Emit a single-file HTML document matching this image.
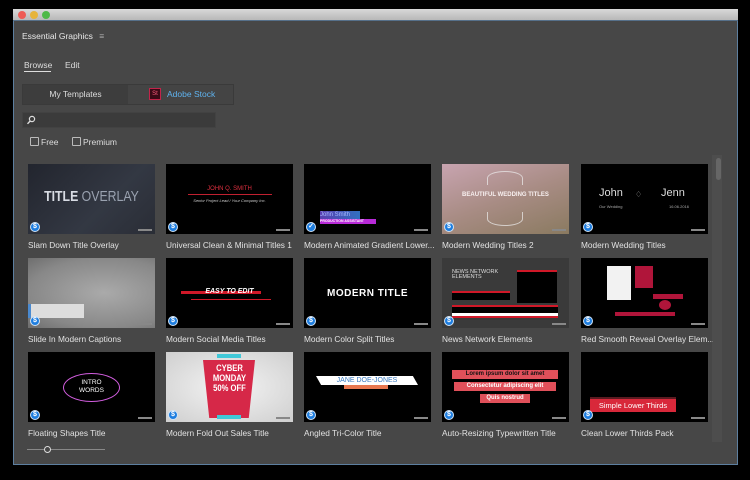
<!DOCTYPE html>
<html><head><meta charset="utf-8"><style>
*{margin:0;padding:0;box-sizing:border-box}
body{width:750px;height:480px;background:#000;position:relative;overflow:hidden;font-family:"Liberation Sans",sans-serif;color:#ddd}
.a{position:absolute}
.win{left:13px;top:9px;width:725px;height:456px;background:#474747;border:1px solid #5d7fa0;border-top:none}
.tb{left:13px;top:9px;width:725px;height:12px;background:linear-gradient(#d8d8d8,#b8b8b8);border-bottom:1px solid #56708a}
.dot{width:8px;height:8px;border-radius:50%;top:11px}
.t{width:127px;height:70px;overflow:hidden;background:#000}
.lb{font-size:8.3px;color:#e2e2e2;white-space:nowrap;width:132px;overflow:hidden}
.bd{width:10px;height:10px;border-radius:50%;background:#1e7ee0;border:1px solid #cfe3f7;left:2px;bottom:2px;color:#fff;font-size:7px;font-weight:bold;text-align:center;line-height:8px}
.id{right:3px;bottom:3px;width:14px;height:2px;background:#888}
.cb{width:9px;height:9px;border:1px solid #bbb;border-radius:1px}
</style></head><body>
<div class="a win"></div>
<div class="a tb"></div>
<div class="a dot" style="left:18px;background:#ee5b55"></div>
<div class="a dot" style="left:30px;background:#e6b43a"></div>
<div class="a dot" style="left:42px;background:#4fb948"></div>

<div class="a" style="left:22px;top:31px;font-size:8.5px;color:#e8e8e8">Essential Graphics <span style="color:#aaa;margin-left:4px">&#8801;</span></div>
<div class="a" style="left:24px;top:60px;font-size:8.5px;color:#ddd">Browse</div>
<div class="a" style="left:24px;top:71px;width:27px;height:1px;background:#ddd"></div>
<div class="a" style="left:65px;top:60px;font-size:8.5px;color:#ddd">Edit</div>

<div class="a" style="left:22px;top:84px;width:212px;height:21px;background:#444;border:1px solid #3a3a3a"></div>
<div class="a" style="left:23px;top:85px;width:105px;height:19px;background:#3d3d3d;font-size:8.5px;text-align:center;line-height:19px;color:#ddd">My Templates</div>
<div class="a" style="left:149px;top:88px;width:12px;height:12px;background:#3a0a16;border:1px solid #c2244a;font-size:6px;color:#ff5d7f;text-align:center;line-height:10px">St</div>
<div class="a" style="left:167px;top:89px;font-size:8.5px;color:#5fb2ee">Adobe Stock</div>

<div class="a" style="left:22px;top:112px;width:194px;height:16px;background:#3b3b3b;border:1px solid #424242"></div>
<svg class="a" style="left:26px;top:115px" width="10" height="10"><circle cx="6" cy="4" r="2.6" fill="none" stroke="#ddd" stroke-width="1.2"/><path d="M4.2 6L1.5 8.8" stroke="#ddd" stroke-width="1.4"/></svg>

<div class="a cb" style="left:30px;top:137px"></div><div class="a" style="left:41px;top:137px;font-size:8.5px">Free</div>
<div class="a cb" style="left:72px;top:137px"></div><div class="a" style="left:83px;top:137px;font-size:8.5px">Premium</div>

<div class="a" style="left:712px;top:155px;width:10px;height:287px;background:#4d4d4d"></div>
<div class="a" style="left:716px;top:158px;width:5px;height:22px;border-radius:3px;background:#666"></div>

<div class="a t" style="left:28px;top:164px;background:linear-gradient(135deg,#22252e,#333843 60%,#2a2d36)"><div class="a" style="left:0;width:127px;top:24px;text-align:center;font-size:15px;font-weight:bold;color:#d8dce4;transform:scaleX(.82)">TITLE <span style="font-weight:normal;color:#9aa2b0">OVERLAY</span></div><div class="a bd">$</div><div class="a id"></div></div>
<div class="a t" style="left:166px;top:164px"><div class="a" style="width:127px;top:22px;text-align:center;font-size:6px;color:#e03040">JOHN Q. SMITH</div><div class="a" style="left:22px;top:30px;width:84px;height:1px;background:#c02030"></div><div class="a" style="width:127px;top:34px;text-align:center;font-size:4px;color:#ccc;font-style:italic">Senior Project Lead / Your Company Inc.</div><div class="a bd">$</div><div class="a id"></div></div>
<div class="a t" style="left:304px;top:164px"><div class="a" style="left:16px;top:47px;width:40px;height:8px;background:linear-gradient(90deg,#5a3fb0,#3070c0);font-size:6px;color:#a9b8ff;line-height:8px">John Smith</div><div class="a" style="left:16px;top:55px;width:56px;height:5px;background:#b82ad8;font-size:3.5px;color:#fff;line-height:5px;font-weight:bold">PRODUCTION ASSISTANT</div><div class="a bd">&#10003;</div><div class="a id"></div></div>
<div class="a t" style="left:442px;top:164px;background:linear-gradient(160deg,#c8a4b0,#a88c84 50%,#8a7a60)"><div class="a" style="left:45px;top:7px;width:36px;height:14px;border:1px solid #eee;border-radius:50% 50% 0 0;border-bottom:none;opacity:.7"></div><div class="a" style="width:127px;top:28px;text-align:center;font-size:6px;font-weight:bold;color:#f8f0f0">BEAUTIFUL WEDDING TITLES</div><div class="a" style="left:45px;top:48px;width:36px;height:14px;border:1px solid #eee;border-radius:0 0 50% 50%;border-top:none;opacity:.7"></div><div class="a bd">$</div><div class="a id"></div></div>
<div class="a t" style="left:581px;top:164px"><div class="a" style="left:18px;top:23px;font-size:11px;color:#ddd">John</div><div class="a" style="left:54px;top:26px;font-size:8px;color:#aaa">&#9826;</div><div class="a" style="left:80px;top:23px;font-size:11px;color:#ddd">Jenn</div><div class="a" style="left:18px;top:40px;font-size:4px;color:#aaa">Our Wedding</div><div class="a" style="left:88px;top:40px;font-size:4px;color:#aaa">16.06.2016</div><div class="a bd">$</div><div class="a id"></div></div>
<div class="a lb" style="left:28px;top:240px">Slam Down Title Overlay</div>
<div class="a lb" style="left:166px;top:240px">Universal Clean &amp; Minimal Titles 1</div>
<div class="a lb" style="left:304px;top:240px">Modern Animated Gradient Lower...</div>
<div class="a lb" style="left:442px;top:240px">Modern Wedding Titles 2</div>
<div class="a lb" style="left:581px;top:240px">Modern Wedding Titles</div>

<div class="a t" style="left:28px;top:258px;background:radial-gradient(ellipse at 60% 50%,#aaa,#888 70%,#6e6e6e)"><div class="a" style="left:0;top:46px;width:56px;height:14px;background:#ddd;border-left:3px solid #4a8ad0"></div><div class="a bd">$</div><div class="a id"></div></div>
<div class="a t" style="left:166px;top:258px"><div class="a" style="left:15px;top:33px;width:80px;height:3px;background:#d01828"></div><div class="a" style="width:127px;top:30px;text-align:center;font-size:7px;font-weight:bold;font-style:italic;color:#fff">EASY TO EDIT</div><div class="a" style="left:25px;top:41px;width:80px;height:1px;background:#d01828"></div><div class="a bd">$</div><div class="a id"></div></div>
<div class="a t" style="left:304px;top:258px"><div class="a" style="width:127px;top:30px;text-align:center;font-size:10px;font-weight:bold;color:#fff;letter-spacing:.5px">MODERN TITLE</div><div class="a bd">$</div><div class="a id"></div></div>
<div class="a t" style="left:442px;top:258px;background:#3a3a3a"><div class="a" style="left:10px;top:12px;font-size:5.5px;color:#ddd;line-height:5px">NEWS NETWORK<br>ELEMENTS</div><div class="a" style="left:75px;top:12px;width:40px;height:33px;background:#000;border-top:2px solid #d01828"></div><div class="a" style="left:10px;top:33px;width:58px;height:9px;background:#000;border-top:2px solid #d01828"></div><div class="a" style="left:10px;top:47px;width:106px;height:8px;background:#000;border-top:2px solid #d01828"></div><div class="a" style="left:10px;top:55px;width:106px;height:5px;background:#fff;border-bottom:2px solid #d01828"></div><div class="a bd">$</div><div class="a id"></div></div>
<div class="a t" style="left:581px;top:258px"><div class="a" style="left:26px;top:8px;width:24px;height:34px;background:#f2f2f2"></div><div class="a" style="left:54px;top:8px;width:18px;height:22px;background:#b0153a"></div><div class="a" style="left:72px;top:36px;width:30px;height:5px;background:#b0153a"></div><div class="a" style="left:78px;top:42px;width:12px;height:10px;background:#b0153a;border-radius:50%"></div><div class="a" style="left:34px;top:54px;width:60px;height:4px;background:#b0153a"></div><div class="a bd">$</div><div class="a id"></div></div>
<div class="a lb" style="left:28px;top:334px">Slide In Modern Captions</div>
<div class="a lb" style="left:166px;top:334px">Modern Social Media Titles</div>
<div class="a lb" style="left:304px;top:334px">Modern Color Split Titles</div>
<div class="a lb" style="left:442px;top:334px">News Network Elements</div>
<div class="a lb" style="left:581px;top:334px">Red Smooth Reveal Overlay Elem...</div>

<div class="a t" style="left:28px;top:352px"><div class="a" style="left:35px;top:21px;width:57px;height:29px;border:1.5px solid #d35ee0;border-radius:50%;text-align:center;font-size:6.5px;color:#fff;line-height:8px;padding-top:5px">INTRO<br>WORDS</div><div class="a bd">$</div><div class="a id"></div></div>
<div class="a t" style="left:166px;top:352px;background:radial-gradient(#f4f4f4,#cfcfcf)"><div class="a" style="left:37px;top:8px;width:52px;height:58px;background:#d62848;clip-path:polygon(0 0,100% 0,88% 100%,12% 100%)"></div><div class="a" style="width:127px;top:11px;text-align:center;font-size:9px;font-weight:bold;color:#fff;line-height:10px;transform:scaleX(.85)">CYBER<br>MONDAY<br>50% OFF</div><div class="a" style="left:51px;top:2px;width:24px;height:4px;background:#40c8d8"></div><div class="a" style="left:51px;top:63px;width:24px;height:4px;background:#40c8d8"></div><div class="a bd">$</div><div class="a id"></div></div>
<div class="a t" style="left:304px;top:352px"><div class="a" style="left:12px;top:24px;width:102px;height:9px;background:#fff;clip-path:polygon(0 0,95% 0,100% 100%,5% 100%);font-size:7px;color:#3a7ac0;text-align:center;line-height:9px">JANE DOE-JONES</div><div class="a" style="left:40px;top:33px;width:44px;height:4px;background:#e87850"></div><div class="a bd">$</div><div class="a id"></div></div>
<div class="a t" style="left:442px;top:352px"><div class="a" style="left:10px;top:18px;width:106px;height:9px;background:#e0505a;font-size:6px;font-weight:bold;color:#111;text-align:center;line-height:9px">Lorem ipsum dolor sit amet</div><div class="a" style="left:12px;top:30px;width:102px;height:9px;background:#e0505a;font-size:6px;font-weight:bold;color:#fff;text-align:center;line-height:9px">Consectetur adipiscing elit</div><div class="a" style="left:38px;top:42px;width:50px;height:9px;background:#e0505a;font-size:6px;font-weight:bold;color:#fff;text-align:center;line-height:9px">Quis nostrud</div><div class="a bd">$</div><div class="a id"></div></div>
<div class="a t" style="left:581px;top:352px"><div class="a" style="left:9px;top:45px;width:86px;height:15px;background:#d8283a;border-top:2px solid #5a1a20;font-size:7.5px;color:#fff;text-align:center;line-height:13px">Simple Lower Thirds</div><div class="a bd">$</div><div class="a id"></div></div>
<div class="a lb" style="left:28px;top:428px">Floating Shapes Title</div>
<div class="a lb" style="left:166px;top:428px">Modern Fold Out Sales Title</div>
<div class="a lb" style="left:304px;top:428px">Angled Tri-Color Title</div>
<div class="a lb" style="left:442px;top:428px">Auto-Resizing Typewritten Title</div>
<div class="a lb" style="left:581px;top:428px">Clean Lower Thirds Pack</div>

<div class="a" style="left:27px;top:449px;width:78px;height:1px;background:#888"></div>
<div class="a" style="left:44px;top:446px;width:7px;height:7px;border-radius:50%;border:1.2px solid #ddd;background:#474747"></div>
</body></html>
